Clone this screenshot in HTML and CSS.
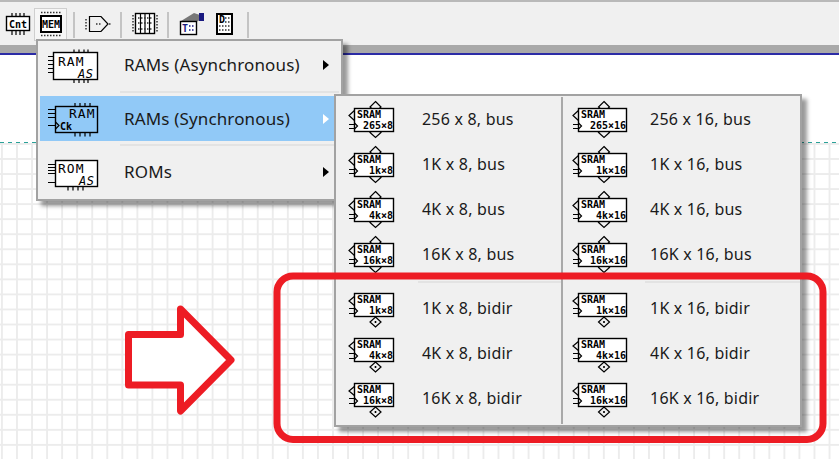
FILE: index.html
```html
<!DOCTYPE html>
<html lang="en">
  <head>
    <meta charset="UTF-8" />
    <meta name="viewport" content="width=device-width, initial-scale=1.0" />
    <title>Memory components menu</title>
    <link rel="stylesheet" href="styles.css">
  </head>
  <body>
    <svg class="defs" width="0" height="0">
      <defs>
        <symbol id="sram8-bus" viewBox="0 0 60 40">
          <path class="line" d="M27.5 2.5 L33 8 L27.5 13 L22 8 Z M27.5 29 L33 33.5 L27.5 38.5 L22 33.5 Z" />
          <path class="line" d="M7 11 L1 16.5 L7 22 M1 25.5 H7 M1 29.5 H7" />
          <rect class="body" x="6.5" y="9.5" width="39" height="23" />
          <path class="line" d="M6.5 24 L9.5 27 L6.5 30" />
          <text class="chip-text" x="9" y="18.5">SRAM</text>
        </symbol>
        <symbol id="sram16-bus" viewBox="0 0 60 40">
          <path class="line" d="M32 2.5 L37.5 8 L32 13 L26.5 8 Z M32 29 L37.5 33.5 L32 38.5 L26.5 33.5 Z" />
          <path class="line" d="M7 11 L1 16.5 L7 22 M1 25.5 H7 M1 29.5 H7" />
          <rect class="body" x="6.5" y="9.5" width="48" height="23" />
          <path class="line" d="M6.5 24 L9.5 27 L6.5 30" />
          <text class="chip-text" x="9" y="18.5">SRAM</text>
        </symbol>
        <symbol id="sram8-bidir" viewBox="0 0 60 40">
          <path class="line" d="M27.5 29 L33 34 L27.5 39 L22 34 Z M27.5 33 V35 M26.5 34 H28.5" />
          <path class="line" d="M7 8 L1 13 L7 18 M1 20.5 H7 M1 25.5 H7" />
          <rect class="body" x="6.5" y="5.5" width="39" height="23" />
          <path class="line" d="M6.5 20 L9.5 23 L6.5 26" />
          <text class="chip-text" x="9" y="14.5">SRAM</text>
        </symbol>
        <symbol id="sram16-bidir" viewBox="0 0 60 40">
          <path class="line" d="M32 29 L37.5 34 L32 39 L26.5 34 Z M32 33 V35 M31 34 H33" />
          <path class="line" d="M7 8 L1 13 L7 18 M1 20.5 H7 M1 25.5 H7" />
          <rect class="body" x="6.5" y="5.5" width="48" height="23" />
          <path class="line" d="M6.5 20 L9.5 23 L6.5 26" />
          <text class="chip-text" x="9" y="14.5">SRAM</text>
        </symbol>
      </defs>
    </svg>

    <div class="toolbar">
      <div class="tool">
        <svg width="28" height="24" viewBox="0 0 28 24">
          <path class="line" d="M8 1 V4 M12 1 V4 M16 1 V4 M20 1 V4 M8 19 V23 M12 19 V23 M16 19 V23 M20 19 V23" />
          <rect class="body" x="2.5" y="4.5" width="23" height="14" />
          <text class="chip-text" x="5" y="16">Cnt</text>
        </svg>
      </div>
      <div class="tool tool-active">
        <svg width="24" height="26" viewBox="0 0 24 26">
          <path class="dots" d="M2 1.5 H22 M2 24.5 H22" />
          <rect class="body thick" x="2" y="5" width="20" height="16" />
          <text class="chip-text" x="3" y="17">MEM</text>
        </svg>
      </div>
      <span class="tool-sep"></span>
      <div class="tool">
        <svg width="26" height="22" viewBox="0 0 26 22">
          <path class="line" d="M4.5 3.5 H16 L23 11 L16 18.5 H4.5 Z" />
          <path class="dots" d="M1 6 V17 M11 11 H17 M24 11 H26" />
        </svg>
      </div>
      <span class="tool-sep"></span>
      <div class="tool">
        <svg width="26" height="24" viewBox="0 0 26 24">
          <path class="dots" d="M1 3 V21 M25 3 V21" />
          <rect class="body" x="3.5" y="1.5" width="19" height="20" />
          <path class="line" d="M8.5 2 V21 M13 2 V21 M17.5 2 V21" />
          <path class="dots" d="M6 6 H21 M6 11 H21 M6 17 H21" />
        </svg>
      </div>
      <span class="tool-sep"></span>
      <div class="tool">
        <svg width="26" height="24" viewBox="0 0 26 24">
          <path d="M2 9 L15 1 L21 3 L21 8 L17 10 Z" fill="#777" />
          <rect x="20" y="1" width="5" height="8" fill="#1a1a80" />
          <rect class="body" x="1.5" y="9.5" width="16" height="13" />
          <text class="chip-text blue" x="3" y="20">T</text>
          <path class="dots blue" d="M10 14 H16 M10 18 H16" />
        </svg>
      </div>
      <div class="tool">
        <svg width="18" height="22" viewBox="0 0 18 22">
          <rect class="body thick" x="1" y="1" width="15" height="20" />
          <text class="chip-text" x="3" y="10">D</text>
          <path class="dots" d="M9 5 H15 M9 9 H15 M3 13 H15 M3 17 H15" />
        </svg>
      </div>
      <span class="tool-sep"></span>
    </div>

    <div class="canvas-top"></div>
    <div class="sheet"></div>

    <div class="menu main-menu">
      <div class="main-item">
        <svg class="main-icon" width="60" height="40" viewBox="0 0 60 40">
          <path class="line" d="M5 11.5 H11 M5 15.5 H11 M5 19.5 H11 M5 23.5 H11 M5 27.5 H11 M31 4.5 V8 M36 4.5 V8 M41 4.5 V8 M45 4.5 V8 M31 34 V38 M36 34 V38 M41 34 V38 M45 34 V38" />
          <rect class="body" x="10.5" y="7.5" width="44" height="27" />
          <text class="chip-text big" x="15" y="21">RAM</text>
          <text class="chip-text as" x="35" y="32.5">AS</text>
        </svg>
        <span class="main-label">RAMs (Asynchronous)</span>
        <span class="more"></span>
      </div>
      <div class="sep main-sep"></div>
      <div class="main-item main-item-on">
        <svg class="main-icon" width="60" height="40" viewBox="0 0 60 40">
          <path class="line" d="M5 10.5 H12 M5 14.5 H12 M5 18.5 H12 M5 26.5 H12 M32 4 V8 M37 4 V8 M42 4 V8 M47 4 V8 M32 33 V37.5 M37 33 V37.5 M42 33 V37.5 M47 33 V37.5" />
          <rect class="body none" x="12.5" y="7.5" width="42" height="26" />
          <path class="line" d="M12.5 23 L16 26.5 L12.5 30" />
          <text class="chip-text big" x="26" y="18.5">RAM</text>
          <text class="chip-text" x="17" y="30.5">Ck</text>
        </svg>
        <span class="main-label">RAMs (Synchronous)</span>
        <span class="more"></span>
      </div>
      <div class="sep main-sep"></div>
      <div class="main-item">
        <svg class="main-icon" width="60" height="40" viewBox="0 0 60 40">
          <path class="line" d="M5 12.5 H12 M5 15.5 H12 M5 18.5 H12 M5 21.5 H12 M5 30.5 H12 M25 35 V38.5 M30 35 V38.5 M35 35 V38.5 M40 35 V38.5" />
          <rect class="body" x="12.5" y="8.5" width="42" height="26" />
          <text class="chip-text big" x="15" y="20.5">ROM</text>
          <text class="chip-text as" x="36" y="33">AS</text>
        </svg>
        <span class="main-label">ROMs</span>
        <span class="more"></span>
      </div>
    </div>

    <div class="menu sub-menu">
      <div class="sub-col">
        <div class="sub-item"><svg class="sub-icon"><use href="#sram8-bus" /><text class="chip-text size" x="45" y="29.5" text-anchor="end">265×8</text></svg><span>256 x 8, bus</span></div>
        <div class="sub-item"><svg class="sub-icon"><use href="#sram8-bus" /><text class="chip-text size" x="45" y="29.5" text-anchor="end">1k×8</text></svg><span>1K x 8, bus</span></div>
        <div class="sub-item"><svg class="sub-icon"><use href="#sram8-bus" /><text class="chip-text size" x="45" y="29.5" text-anchor="end">4k×8</text></svg><span>4K x 8, bus</span></div>
        <div class="sub-item"><svg class="sub-icon"><use href="#sram8-bus" /><text class="chip-text size" x="45" y="29.5" text-anchor="end">16k×8</text></svg><span>16K x 8, bus</span></div>
        <div class="sep sub-sep"></div>
        <div class="sub-item"><svg class="sub-icon"><use href="#sram8-bidir" /><text class="chip-text size" x="45" y="25.5" text-anchor="end">1k×8</text></svg><span>1K x 8, bidir</span></div>
        <div class="sub-item"><svg class="sub-icon"><use href="#sram8-bidir" /><text class="chip-text size" x="45" y="25.5" text-anchor="end">4k×8</text></svg><span>4K x 8, bidir</span></div>
        <div class="sub-item"><svg class="sub-icon"><use href="#sram8-bidir" /><text class="chip-text size" x="45" y="25.5" text-anchor="end">16k×8</text></svg><span>16K x 8, bidir</span></div>
      </div>
      <div class="sub-col sub-col-wide">
        <div class="sub-item"><svg class="sub-icon"><use href="#sram16-bus" /><text class="chip-text size" x="54" y="29.5" text-anchor="end">265×16</text></svg><span>256 x 16, bus</span></div>
        <div class="sub-item"><svg class="sub-icon"><use href="#sram16-bus" /><text class="chip-text size" x="54" y="29.5" text-anchor="end">1k×16</text></svg><span>1K x 16, bus</span></div>
        <div class="sub-item"><svg class="sub-icon"><use href="#sram16-bus" /><text class="chip-text size" x="54" y="29.5" text-anchor="end">4k×16</text></svg><span>4K x 16, bus</span></div>
        <div class="sub-item"><svg class="sub-icon"><use href="#sram16-bus" /><text class="chip-text size" x="54" y="29.5" text-anchor="end">16k×16</text></svg><span>16K x 16, bus</span></div>
        <div class="sep sub-sep"></div>
        <div class="sub-item"><svg class="sub-icon"><use href="#sram16-bidir" /><text class="chip-text size" x="54" y="25.5" text-anchor="end">1k×16</text></svg><span>1K x 16, bidir</span></div>
        <div class="sub-item"><svg class="sub-icon"><use href="#sram16-bidir" /><text class="chip-text size" x="54" y="25.5" text-anchor="end">4k×16</text></svg><span>4K x 16, bidir</span></div>
        <div class="sub-item"><svg class="sub-icon"><use href="#sram16-bidir" /><text class="chip-text size" x="54" y="25.5" text-anchor="end">16k×16</text></svg><span>16K x 16, bidir</span></div>
      </div>
    </div>

    <!-- red markup drawn on top of the screenshot -->
    <svg class="markup" width="839" height="459" viewBox="0 0 839 459">
      <rect x="277" y="276" width="546" height="163.5" rx="16" />
      <polygon points="128.5,334.5 180.5,334.5 180.5,309 231,360 180.5,411 180.5,385 128.5,385" />
    </svg>
  </body>
</html>
```

FILE: styles.css
```css
html,
body {
  margin: 0;
  height: 100%;
  overflow: hidden;
}
body {
  position: relative;
  font-family: "Noto Sans", sans-serif;
  font-size: 16px;
  letter-spacing: 0.2px;
  color: #1a1a1a;
  background-color: #fff;
}
.defs {
  position: absolute;
}

/* toolbar */
.toolbar {
  height: 40px;
  padding-top: 3px;
  display: flex;
  align-items: center;
  background-color: #f0f0f0;
  border-top: 2px solid #b9b9b9;
  border-bottom: 8px solid #a9a9a9;
  box-shadow: 0 2px 0 #2b2ba6;
  padding-left: 1px;
}
.tool {
  width: 31px;
  height: 31px;
  display: flex;
  align-items: center;
  justify-content: center;
  border: 1px solid transparent;
  margin-top: -2px;
}
.tool-active {
  background-color: #f6f6f6;
  border-color: #cfcfcf;
}
.tool-sep {
  width: 2px;
  height: 26px;
  margin: 0 6px;
  background-color: #c4c4c4;
}

/* canvas */
.canvas-top {
  height: 90px;
  background: repeating-linear-gradient(90deg, #2aa198 0 4px, transparent 4px 8px) left bottom / 100% 1px no-repeat;
}
.sheet {
  height: 316px;
  background-color: #fff;
  background-image:
    linear-gradient(90deg, #ececec 1.5px, transparent 1.5px),
    linear-gradient(#ececec 1.5px, transparent 1.5px);
  background-size: 15.05px 15.05px;
  background-position: 1px 0;
}

/* popup menus */
.menu {
  position: absolute;
  box-sizing: border-box;
  background-color: #f0f0f0;
  border: 2px solid #a2a2a2;
  box-shadow: 5px 5px 4px rgba(0, 0, 0, 0.4);
}
.main-menu {
  left: 36px;
  top: 39px;
  width: 307px;
  height: 162px;
  padding: 1px 2px;
  font-size: 17px;
  letter-spacing: 0.15px;
}
.main-item {
  height: 45px;
  display: flex;
  align-items: center;
}
.main-item-on {
  margin-top: 1px;
  margin-bottom: -1px;
  background-color: #91c9f7;
}
.main-icon {
  width: 60px;
  height: 40px;
  margin-left: 3px;
  margin-right: 21px;
}
.main-label {
  flex: 1;
}
.more {
  width: 0;
  height: 0;
  margin-right: 10px;
  border-left: 6px solid #000;
  border-top: 5px solid transparent;
  border-bottom: 5px solid transparent;
}
.main-item-on .more {
  border-left-color: #fff;
}
.sep {
  height: 2px;
  background-color: #e3e3e3;
  margin-top: 4px;
  margin-bottom: 3px;
}
.main-sep {
  margin-left: 80px;
}

.sub-menu {
  left: 334px;
  top: 94px;
  width: 468px;
  height: 333px;
  padding: 1px 0 0 0;
  display: flex;
}
.sub-col {
  width: 226px;
  height: 327px;
  border-right: 2px solid #a9a9a9;
}
.sub-col-wide {
  width: 238px;
  border-right: none;
}
.sub-item {
  height: 43px;
  padding-top: 2px;
  display: flex;
  align-items: flex-start;
  line-height: 41px;
}
.sub-icon {
  width: 60px;
  height: 40px;
  margin-left: 12px;
  margin-right: 14px;
  flex: none;
}
.sub-col-wide .sub-icon {
  margin-left: 9px;
  margin-right: 18px;
}
.sub-sep {
  margin-left: 82px;
}

/* icon drawing */
.line {
  fill: none;
  stroke: #000;
  stroke-width: 1.2;
}
.body {
  fill: #fff;
  stroke: #000;
  stroke-width: 1.4;
}
.body.none {
  fill: none;
}
.body.thick {
  stroke-width: 2;
}
.dots {
  fill: none;
  stroke: #333;
  stroke-width: 1.5;
  stroke-dasharray: 1.5 1.5;
}
.chip-text {
  font-family: "DejaVu Sans Mono", monospace;
  font-size: 10px;
  font-weight: bold;
  letter-spacing: 0;
  fill: #000;
}
.chip-text.big {
  font-size: 13px;
  font-weight: normal;
  letter-spacing: 1px;
}
.chip-text.as {
  font-size: 12px;
  font-style: italic;
  font-weight: normal;
  letter-spacing: 0.5px;
}
.chip-text.blue {
  fill: #1a1a80;
}
.dots.blue {
  stroke: #1a1a80;
}

/* red markup */
.markup {
  position: absolute;
  left: 0;
  top: 0;
  pointer-events: none;
}
.markup rect {
  fill: none;
  stroke: #ed1c24;
  stroke-width: 7;
}
.markup polygon {
  fill: #fff;
  stroke: #ed1c24;
  stroke-width: 7;
  stroke-linejoin: round;
}
```
